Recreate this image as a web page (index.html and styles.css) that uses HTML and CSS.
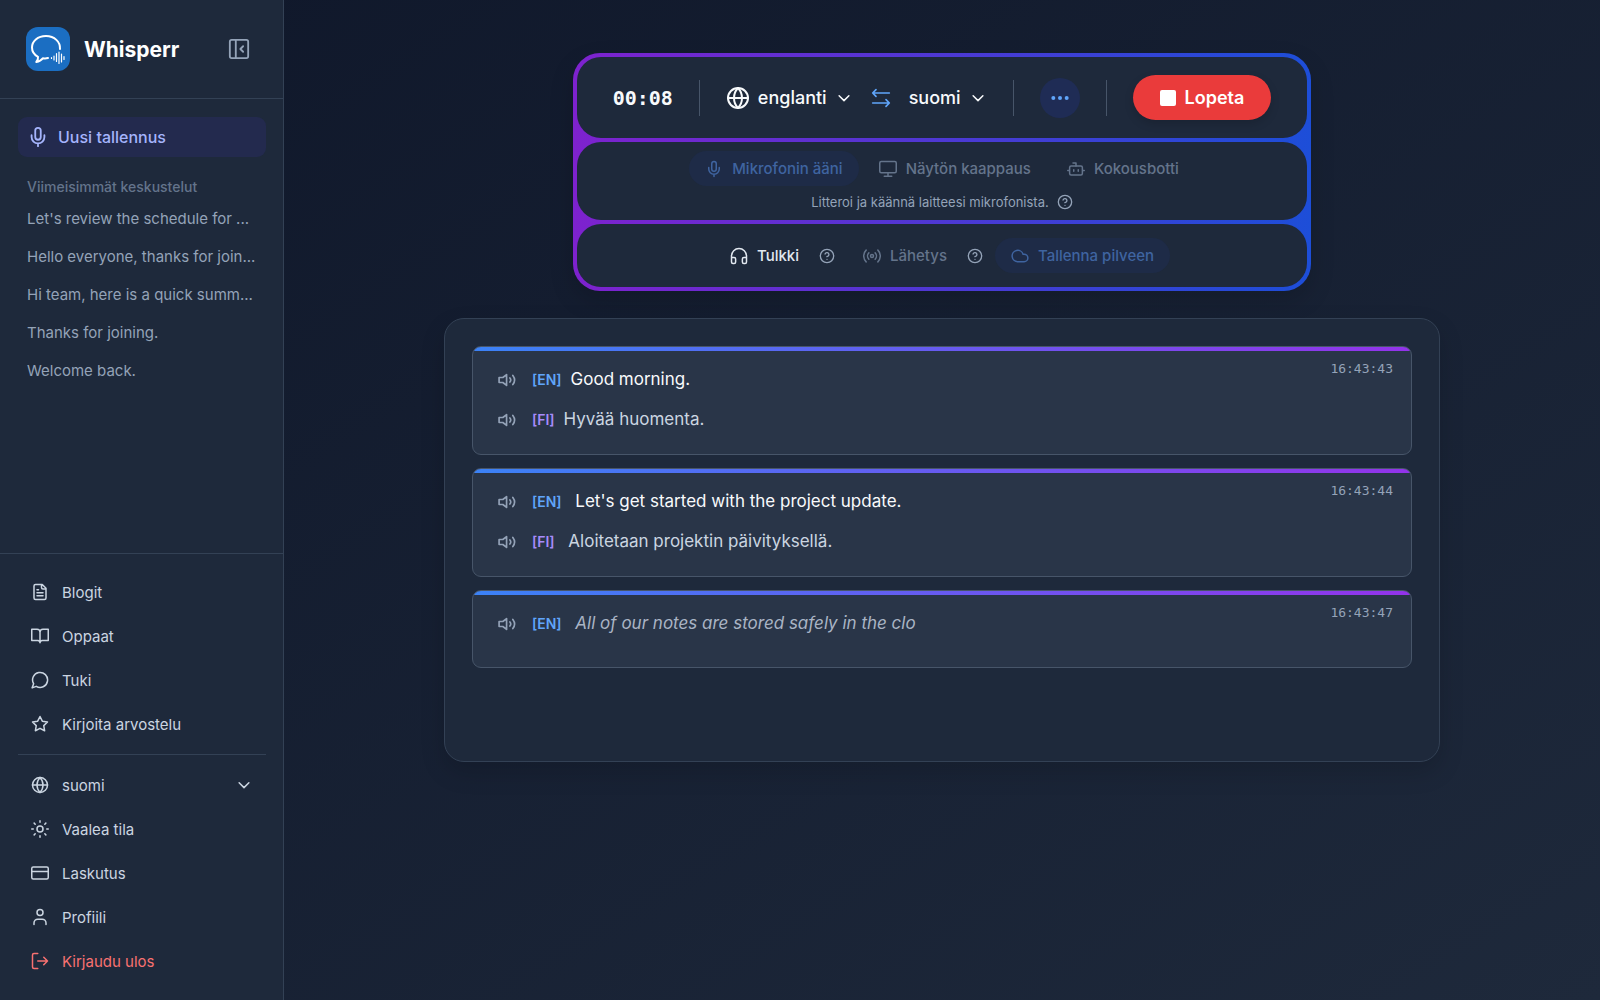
FILE: index.html
```html
<!DOCTYPE html>
<html lang="fi">
<head>
  <meta charset="UTF-8" />
  <meta name="viewport" content="width=device-width, initial-scale=1.0"/>
  <title>Whisperr</title>
  <link rel="stylesheet" href="styles.css">
</head>
<body>

  <!-- Shared icons -->
  <svg class="sprite" aria-hidden="true">
    <symbol id="i-mic" viewBox="0 0 24 24"><path d="M12 19v3M19 10v2a7 7 0 0 1-14 0v-2"/><rect x="9" y="2" width="6" height="13" rx="3"/></symbol>
    <symbol id="i-globe" viewBox="0 0 24 24"><circle cx="12" cy="12" r="10"/><path d="M12 2a14.5 14.5 0 0 0 0 20 14.5 14.5 0 0 0 0-20M2 12h20"/></symbol>
    <symbol id="i-chevron" viewBox="0 0 24 24"><path d="m5.500 9 6.500 6.500L18.500 9"/></symbol>
    <symbol id="i-help" viewBox="0 0 24 24"><circle cx="12" cy="12" r="10"/><path d="M9.09 9a3 3 0 0 1 5.83 1c0 2-3 3-3 3M12 17h.01"/></symbol>
    <symbol id="i-volume" viewBox="0 0 24 24"><path d="M11.500 5.500 7 9H2.500v6H7l4.500 3.500zM15.500 9.500a4 4 0 0 1 0 5M19 6.500a9 9 0 0 1 0 11"/></symbol>
  </svg>

  <div class="app">
    <aside class="sidebar">
      <header class="brand">
        <svg class="logo" viewBox="0 0 44 44" aria-hidden="true">
          <rect width="44" height="44" rx="12" fill="#1b6ec2"/>
          <g fill="none" stroke="#fff" stroke-linecap="round" stroke-linejoin="round">
            <path stroke-width="2" d="M34 22c.5-7-5.500-13-14-13S6 14.500 6 20.500c0 4 2.200 7.300 6 9.300.3 2-.5 3.800-1.700 5.200 3-.4 5.200-1.800 6.700-3.800 1.700.3 3.500.2 5-.2"/>
            <path stroke-width="1.200" d="M25.500 30.500v1M28 29v4M30.500 26.500v8M33 25v11.500M35.500 27v8M38 29.500v3"/>
          </g>
        </svg>
        <h1>Whisperr</h1>
        <button class="collapse" type="button" aria-label="Piilota sivupalkki">
          <svg class="icon icon-22" viewBox="0 0 24 24"><rect x="2" y="2" width="20" height="20" rx="2"/><path d="M8.500 2v20M16.500 9l-3 3 3 3"/></svg>
        </button>
      </header>

      <nav class="history">
        <a class="new-recording" href="#"><svg class="icon icon-22"><use href="#i-mic"/></svg>Uusi tallennus</a>
        <h2>Viimeisimmät keskustelut</h2>
        <a class="chat" href="#">Let's review the schedule for ...</a>
        <a class="chat" href="#">Hello everyone, thanks for join...</a>
        <a class="chat" href="#">Hi team, here is a quick summ...</a>
        <a class="chat" href="#">Thanks for joining.</a>
        <a class="chat" href="#">Welcome back.</a>
      </nav>

      <nav class="menu">
        <a href="#"><svg class="icon" viewBox="0 0 24 24"><path d="M15 2H6a2 2 0 0 0-2 2v16a2 2 0 0 0 2 2h12a2 2 0 0 0 2-2V7zM14 2v4a2 2 0 0 0 2 2h4M10 9H8M16 13H8M16 17H8"/></svg>Blogit</a>
        <a href="#"><svg class="icon" viewBox="0 0 24 24"><path d="M12 7v14M12 7a4 4 0 0 0-4-4H1v15h8a3 3 0 0 1 3 3 3 3 0 0 1 3-3h8V3h-7a4 4 0 0 0-4 4"/></svg>Oppaat</a>
        <a href="#"><svg class="icon" viewBox="0 0 24 24"><path d="M7 20.500A10 10 0 1 0 3.500 17L1.500 22.500z"/></svg>Tuki</a>
        <a href="#"><svg class="icon" viewBox="0 0 24 24"><path d="m12 2 3.090 6.260L22 9.270l-5 4.870 1.180 6.880L12 17.770l-6.180 3.250L7 14.140 2 9.270l6.910-1.010z"/></svg>Kirjoita arvostelu</a>
        <hr>
        <button type="button"><svg class="icon"><use href="#i-globe"/></svg>suomi<svg class="icon caret"><use href="#i-chevron"/></svg></button>
        <button type="button"><svg class="icon" viewBox="0 0 24 24"><circle cx="12" cy="12" r="4"/><path d="M12 1v2M12 21v2M4.200 4.200l1.400 1.400M18.400 18.400l1.400 1.400M1 12h2M21 12h2M5.600 18.400l-1.400 1.400M19.800 4.200l-1.400 1.400"/></svg>Vaalea tila</button>
        <a href="#"><svg class="icon" viewBox="0 0 24 24"><rect x="1" y="4" width="22" height="16" rx="2"/><path d="M1 10h22"/></svg>Laskutus</a>
        <a href="#"><svg class="icon" viewBox="0 0 24 24"><circle cx="12" cy="6" r="4"/><path d="M4 22v-2a5 5 0 0 1 5-5h6a5 5 0 0 1 5 5v2"/></svg>Profiili</a>
        <button class="logout" type="button"><svg class="icon" viewBox="0 0 24 24"><path d="M9 22H4a2 2 0 0 1-2-2V4a2 2 0 0 1 2-2h5M17 17l5-5-5-5M22 12H9"/></svg>Kirjaudu ulos</button>
      </nav>
    </aside>

    <main>
      <section class="controls">
        <div class="control-row main-row">
          <span class="timer">00:08</span>
          <span class="separator"></span>
          <div class="languages">
            <button class="language" type="button"><svg class="icon icon-24"><use href="#i-globe"/></svg>englanti<svg class="icon"><use href="#i-chevron"/></svg></button>
            <button class="swap" type="button" aria-label="Vaihda kielet"><svg class="icon icon-20" viewBox="0 0 24 24"><path d="M6 2 2 6l4 4M2 6h20M18 14l4 4-4 4M22 18H2"/></svg></button>
            <button class="language" type="button">suomi<svg class="icon"><use href="#i-chevron"/></svg></button>
          </div>
          <span class="separator"></span>
          <button class="more" type="button" aria-label="Lisää"><svg class="icon icon-20 dots" viewBox="0 0 24 24"><circle cx="4" cy="12" r="2.400"/><circle cx="12" cy="12" r="2.400"/><circle cx="20" cy="12" r="2.400"/></svg></button>
          <span class="separator"></span>
          <button class="stop" type="button"><span class="stop-mark"></span>Lopeta</button>
        </div>

        <div class="control-row source-row">
          <div class="sources">
            <button class="pill active" type="button" disabled><svg class="icon"><use href="#i-mic"/></svg>Mikrofonin ääni</button>
            <button class="pill" type="button" disabled><svg class="icon" viewBox="0 0 24 24"><rect x="1" y="2" width="22" height="15" rx="2"/><path d="M7 21.500h10M12 17v4"/></svg>Näytön kaappaus</button>
            <button class="pill" type="button" disabled><svg class="icon" viewBox="0 0 24 24"><path d="M12 8V4H8M1 14h2M21 14h2M15 13v2M9 13v2"/><rect x="3.500" y="8" width="17" height="12" rx="2"/></svg>Kokousbotti</button>
          </div>
          <p class="hint">Litteroi ja käännä laitteesi mikrofonista.<button class="help" type="button" aria-label="Ohje"><svg class="icon icon-16"><use href="#i-help"/></svg></button></p>
        </div>

        <div class="control-row option-row">
          <div class="option">
            <button class="pill on" type="button"><svg class="icon" viewBox="0 0 24 24"><path d="M2 14h3.500a2 2 0 0 1 2 2v4a2 2 0 0 1-2 2H4a2 2 0 0 1-2-2v-8a10 10 0 0 1 20 0v8a2 2 0 0 1-2 2h-1.500a2 2 0 0 1-2-2v-4a2 2 0 0 1 2-2H22"/></svg>Tulkki</button>
            <button class="help" type="button" aria-label="Ohje"><svg class="icon icon-16"><use href="#i-help"/></svg></button>
          </div>
          <div class="option">
            <button class="pill" type="button" disabled><svg class="icon" viewBox="0 0 24 24"><circle cx="12" cy="12" r="2"/><path d="M16.200 7.800a6 6 0 0 1 0 8.400M7.800 16.200a6 6 0 0 1 0-8.400M19.800 4.200a11 11 0 0 1 0 15.600M4.200 19.800a11 11 0 0 1 0-15.600"/></svg>Lähetys</button>
            <button class="help" type="button" aria-label="Ohje"><svg class="icon icon-16"><use href="#i-help"/></svg></button>
          </div>
          <button class="pill active" type="button" disabled><svg class="icon" viewBox="0 0 24 24"><path d="M17.500 19.500H9a7.500 7.500 0 1 1 7.100-10h1.400a5 5 0 1 1 0 10z"/></svg>Tallenna pilveen</button>
        </div>
      </section>

      <section class="transcript">
        <article class="entry">
          <div class="lines">
            <div class="line source"><button class="speak" type="button" aria-label="Toista"><svg class="icon icon-20"><use href="#i-volume"/></svg></button><span class="tag">[EN]</span><p>Good morning.</p></div>
            <div class="line translation"><button class="speak" type="button" aria-label="Toista"><svg class="icon icon-20"><use href="#i-volume"/></svg></button><span class="tag">[FI]</span><p>Hyvää huomenta.</p></div>
          </div>
          <time>16:43:43</time>
        </article>
        <article class="entry">
          <div class="lines">
            <div class="line source"><button class="speak" type="button" aria-label="Toista"><svg class="icon icon-20"><use href="#i-volume"/></svg></button><span class="tag">[EN]</span><p> Let's get started with the project update.</p></div>
            <div class="line translation"><button class="speak" type="button" aria-label="Toista"><svg class="icon icon-20"><use href="#i-volume"/></svg></button><span class="tag">[FI]</span><p> Aloitetaan projektin päivityksellä.</p></div>
          </div>
          <time>16:43:44</time>
        </article>
        <article class="entry">
          <div class="lines">
            <div class="line source pending"><button class="speak" type="button" aria-label="Toista"><svg class="icon icon-20"><use href="#i-volume"/></svg></button><span class="tag">[EN]</span><p> All of our notes are stored safely in the clo</p></div>
          </div>
          <time>16:43:47</time>
        </article>
      </section>
    </main>
  </div>

</body>
</html>
```
FILE: styles.css
```css
* {
  margin: 0;
  padding: 0;
  box-sizing: border-box;
}

body {
  background: #0f172a;
  color: #f8fafc;
  font-family: Inter, "Liberation Sans", sans-serif;
  font-size: 15px;
}

button {
  background: none;
  border: none;
  color: inherit;
  font: inherit;
  cursor: pointer;
}

a {
  color: inherit;
  text-decoration: none;
}

.sprite {
  display: none;
}

.icon {
  width: 18px;
  height: 18px;
  flex-shrink: 0;
  fill: none;
  stroke: currentColor;
  stroke-width: 2;
  stroke-linecap: round;
  stroke-linejoin: round;
}

.icon-16 { width: 16px; height: 16px; }
.icon-20 { width: 20px; height: 20px; }
.icon-22 { width: 22px; height: 22px; }
.icon-24 { width: 24px; height: 24px; }

.app {
  display: flex;
  min-height: 100vh;
  background: linear-gradient(to bottom right, #0f172a, #1e293b);
}

/* Sidebar */
.sidebar {
  display: flex;
  flex-direction: column;
  width: 284px;
  flex-shrink: 0;
  background: #1e293b;
  border-right: 1px solid #334155;
}

.brand {
  display: flex;
  align-items: center;
  gap: 14px;
  padding: 27px 33px 27px 26px;
  border-bottom: 1px solid #334155;
}

.logo {
  width: 44px;
  height: 44px;
}

.brand h1 {
  flex: 1;
  font-size: 21px;
  font-weight: 700;
  color: #fff;
}

.collapse {
  display: flex;
  color: #94a3b8;
}

.history {
  flex: 1;
  padding: 18px 17px 18px 18px;
}

.new-recording {
  display: flex;
  align-items: center;
  gap: 9px;
  height: 40px;
  padding: 0 9px;
  border-radius: 9px;
  background: #232a4e;
  color: #a5b4fc;
  font-size: 16px;
  font-weight: 500;
}

.history h2 {
  margin: 21px 9px 4px;
  font-size: 14px;
  line-height: 18px;
  font-weight: 500;
  color: #64748b;
}

.chat {
  display: block;
  padding: 0 9px;
  line-height: 38px;
  color: #94a3b8;
  white-space: nowrap;
}

.menu {
  padding: 16px 17px 17px 18px;
  border-top: 1px solid #334155;
}

.menu a,
.menu button {
  display: flex;
  align-items: center;
  gap: 13px;
  width: 100%;
  height: 44px;
  padding: 0 13px;
  color: #cbd5e1;
  text-align: left;
}

.menu hr {
  margin: 8px 0;
  border: none;
  border-top: 1px solid #334155;
}

.menu .caret {
  margin-left: auto;
}

.menu .logout {
  color: #f87171;
}

/* Main area */
main {
  flex: 1;
  display: flex;
  flex-direction: column;
  align-items: center;
  gap: 27px;
  padding: 53px 36px;
}

.controls {
  display: flex;
  flex-direction: column;
  gap: 4px;
  padding: 4px;
  border-radius: 27px;
  background: linear-gradient(90deg, #7e22ce, #1d4ed8);
  box-shadow: 0 10px 24px rgba(0, 0, 0, 0.15);
}

.control-row {
  display: flex;
  align-items: center;
  justify-content: center;
  border-radius: 24px;
  background: #1e293b;
}

.main-row {
  gap: 26px;
  padding: 18px 36px;
}

.timer {
  font-family: "DejaVu Sans Mono", monospace;
  font-size: 20px;
  font-weight: 700;
}

.separator {
  width: 1px;
  height: 36px;
  background: #475569;
}

.languages {
  display: flex;
  align-items: center;
  gap: 18px;
}

.language {
  display: flex;
  align-items: center;
  gap: 8px;
  font-size: 18px;
  font-weight: 500;
}

.swap {
  display: flex;
  color: #60a5fa;
}

.more {
  display: flex;
  align-items: center;
  justify-content: center;
  width: 40px;
  height: 40px;
  border-radius: 50%;
  background: #1f2c55;
  color: #60a5fa;
}

.dots {
  fill: currentColor;
  stroke: none;
}

.stop {
  display: flex;
  align-items: center;
  gap: 9px;
  height: 45px;
  padding: 0 27px;
  border-radius: 23px;
  background: #ea3b3b;
  color: #fff;
  font-size: 18px;
  font-weight: 600;
  box-shadow: 0 4px 10px rgba(0, 0, 0, 0.15);
}

.stop-mark {
  width: 16px;
  height: 16px;
  border-radius: 2px;
  background: #fff;
}

.source-row {
  flex-direction: column;
  gap: 7px;
  padding: 9px 36px;
}

.sources {
  display: flex;
  gap: 4px;
}

.pill {
  display: flex;
  align-items: center;
  gap: 9px;
  height: 35px;
  padding: 0 16px;
  border-radius: 18px;
  color: #64748b;
  font-weight: 500;
}

.pill.active {
  background: #1e2b47;
  color: #3f64a0;
}

.pill.on {
  color: #e2e8f0;
}

.hint {
  display: flex;
  align-items: center;
  gap: 8px;
  font-size: 13px;
  line-height: 18px;
  color: #94a3b8;
}

.help {
  display: flex;
  color: #94a3b8;
}

.option-row {
  gap: 12px;
  padding: 14px 36px;
}

.option {
  display: flex;
  align-items: center;
  gap: 4px;
}

/* Transcript */
.transcript {
  display: flex;
  flex-direction: column;
  gap: 13px;
  width: 100%;
  max-width: 996px;
  min-height: 444px;
  padding: 27px;
  border: 1px solid #334155;
  border-radius: 20px;
  background: #1e293b;
  box-shadow: 0 10px 24px rgba(0, 0, 0, 0.15);
}

.entry {
  display: flex;
  align-items: flex-start;
  gap: 18px;
  padding: 13px 18px 21px 24px;
  border: 1px solid #475569;
  border-radius: 9px;
  background: linear-gradient(90deg, #3b82f6, #9333ea) top / 100% 4px no-repeat, #293548;
}

.lines {
  flex: 1;
  padding-top: 5px;
}

.line {
  display: flex;
  align-items: baseline;
  height: 28px;
  line-height: 28px;
}

.source {
  margin-bottom: 9px;
}

.translation {
  margin-top: 12px;
}

.speak {
  display: flex;
  align-self: center;
  margin-right: 15px;
  padding-top: 2px;
  color: #94a3b8;
}

.tag {
  margin-right: 9px;
  font-size: 14px;
  font-weight: 600;
  color: #60a5fa;
}

.translation .tag {
  color: #a78bfa;
}

.line p {
  font-size: 17px;
  white-space: pre-wrap;
}

.translation p {
  color: #cbd5e1;
}

.pending p {
  font-style: italic;
  color: #a9b4c4;
}

time {
  font-family: "DejaVu Sans Mono", monospace;
  font-size: 13px;
  line-height: 18px;
  color: #94a3b8;
}
```
